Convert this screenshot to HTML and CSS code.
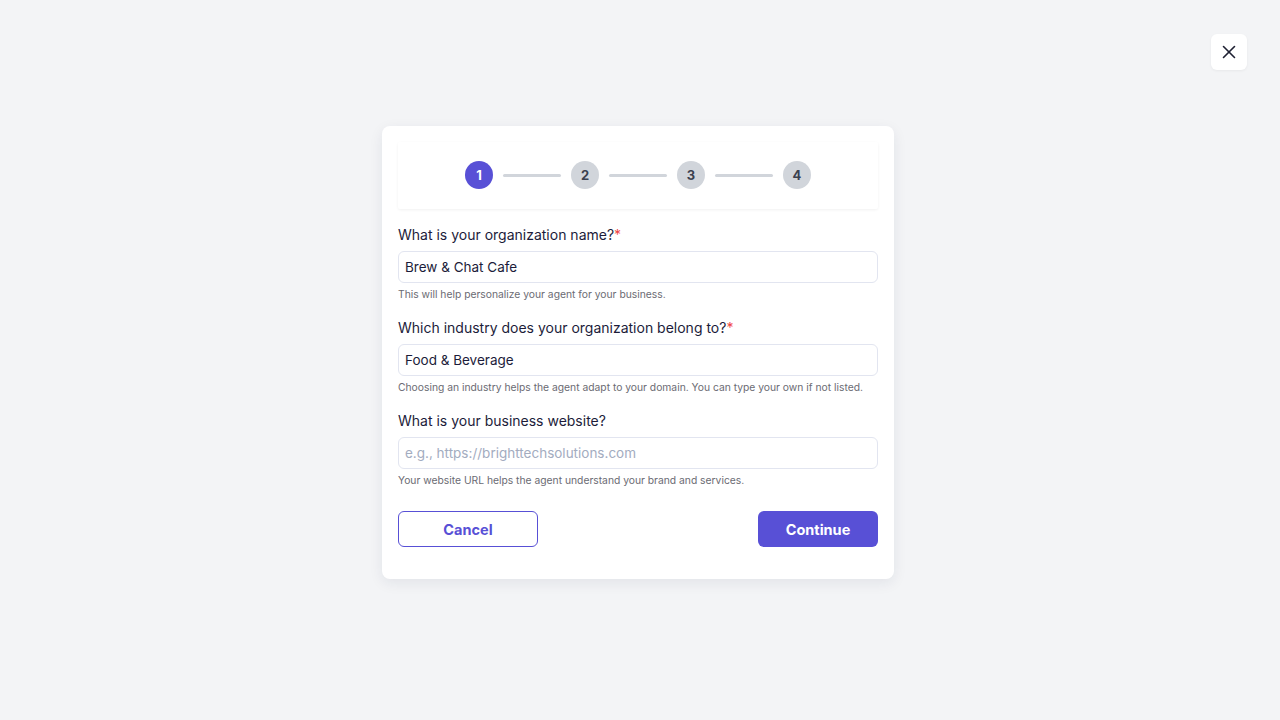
FILE: index.html
```html
<!DOCTYPE html>
<html lang="en">
<head>
    <meta charset="UTF-8">
    <meta name="viewport" content="width=device-width, initial-scale=1.0">
    <title>Onboarding</title>
    <link rel="stylesheet" href="styles.css">
</head>
<body>
    <button class="close-btn" aria-label="Close">
        <svg width="16" height="16" viewBox="0 0 16 16" fill="none" stroke="currentColor" stroke-width="1.6" stroke-linecap="round">
            <line x1="2.5" y1="2.5" x2="13.5" y2="13.5" />
            <line x1="13.5" y1="2.5" x2="2.5" y2="13.5" />
        </svg>
    </button>

    <div class="page">
        <div class="card">
            <div class="stepper">
                <span class="step active">1</span>
                <span class="step-line"></span>
                <span class="step">2</span>
                <span class="step-line"></span>
                <span class="step">3</span>
                <span class="step-line"></span>
                <span class="step">4</span>
            </div>

            <form class="form">
                <div class="field">
                    <label class="field-label" for="org">What is your organization name?<span class="req">*</span></label>
                    <input class="field-input" id="org" type="text" value="Brew &amp; Chat Cafe">
                    <p class="field-help">This will help personalize your agent for your business.</p>
                </div>

                <div class="field">
                    <label class="field-label" for="industry">Which industry does your organization belong to?<span class="req">*</span></label>
                    <input class="field-input" id="industry" type="text" value="Food &amp; Beverage">
                    <p class="field-help">Choosing an industry helps the agent adapt to your domain. You can type your own if not listed.</p>
                </div>

                <div class="field">
                    <label class="field-label" for="site">What is your business website?</label>
                    <input class="field-input" id="site" type="text" placeholder="e.g., https://brighttechsolutions.com">
                    <p class="field-help">Your website URL helps the agent understand your brand and services.</p>
                </div>

                <div class="actions">
                    <button type="button" class="btn btn-outline">Cancel</button>
                    <button type="button" class="btn btn-primary">Continue</button>
                </div>
            </form>
        </div>
    </div>
</body>
</html>
```

FILE: styles.css
```css
* {
	border: 0;
	box-sizing: border-box;
	margin: 0;
	padding: 0;
}

:root {
	--bg: #f3f4f6;
	--card: #ffffff;
	--fg: #1c1c3a;
	--muted: #6b6b73;
	--primary: #5850d6;
	--grey: #d1d5db;
	--border: #e2e5f0;
	--radius: 6px;
}

body {
	background-color: var(--bg);
	color: var(--fg);
	font-family: Inter, "Noto Sans", sans-serif;
	height: 100vh;
	position: relative;
}

button {
	appearance: none;
	background: none;
	font-family: inherit;
	cursor: pointer;
}

.close-btn {
	position: absolute;
	top: 34px;
	right: 33px;
	width: 36px;
	height: 36px;
	border-radius: var(--radius);
	background-color: var(--card);
	color: #1f2133;
	display: flex;
	align-items: center;
	justify-content: center;
	box-shadow: 0 1px 3px rgba(0, 0, 0, 0.05);
}

.page {
	display: flex;
	justify-content: center;
	padding: 126px 4px 0 0;
}

.card {
	width: 512px;
	background-color: var(--card);
	border-radius: 8px;
	padding: 16px 16px 32px;
	box-shadow: 0 4px 14px rgba(30, 40, 80, 0.08);
}

.stepper {
	display: flex;
	align-items: center;
	justify-content: center;
	padding: 19px 0 20px;
	box-shadow: 0 1px 3px rgba(0, 0, 0, 0.06);
	border-radius: 2px;
	margin-bottom: 16px;
}

.step {
	width: 28px;
	height: 28px;
	border-radius: 50%;
	background-color: var(--grey);
	color: #3b4150;
	font-size: 13px;
	font-weight: 700;
	display: flex;
	align-items: center;
	justify-content: center;

	&.active {
		background-color: var(--primary);
		color: #fff;
	}
}

.step-line {
	width: 58px;
	height: 3px;
	border-radius: 2px;
	background-color: var(--grey);
	margin: 0 10px;
}

.form {
	display: flex;
	flex-direction: column;
}

.field {
	display: flex;
	flex-direction: column;

	+ .field {
		margin-top: 17px;
	}
}

.field-label {
	font-size: 14px;
	line-height: 19px;
	margin-bottom: 7px;
}

.field-input {
	height: 32px;
	border: 1px solid var(--border);
	border-radius: var(--radius);
	padding: 0 6px;
	font-family: inherit;
	font-size: 13.5px;
	color: var(--fg);
	outline: none;

	&::placeholder {
		color: #a3acbf;
	}
}

.field-help {
	margin-top: 5px;
	font-size: 10.3px;
	line-height: 13px;
	color: var(--muted);
}

.req {
	color: #ef4444;
}

.actions {
	display: flex;
	justify-content: space-between;
	margin-top: 24px;
}

.btn {
	height: 36px;
	border-radius: var(--radius);
	font-size: 14.5px;
	font-weight: 700;
}

.btn-outline {
	width: 140px;
	border: 1px solid var(--primary);
	color: var(--primary);
}

.btn-primary {
	width: 120px;
	background-color: var(--primary);
	color: #fff;
}
```
